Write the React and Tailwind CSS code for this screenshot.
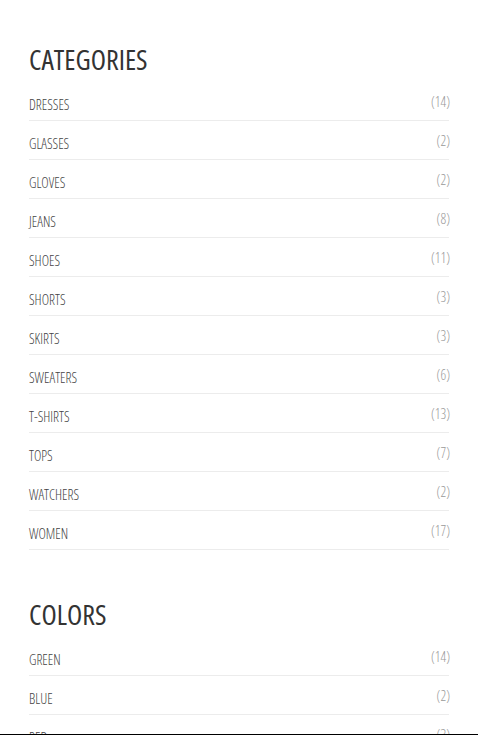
const categories = [
  ["DRESSES", 14],
  ["GLASSES", 2],
  ["GLOVES", 2],
  ["JEANS", 8],
  ["SHOES", 11],
  ["SHORTS", 3],
  ["SKIRTS", 3],
  ["SWEATERS", 6],
  ["T-SHIRTS", 13],
  ["TOPS", 7],
  ["WATCHERS", 2],
  ["WOMEN", 17],
];

const colors = [
  ["GREEN", 14],
  ["BLUE", 2],
  ["RED", 3],
];

function Section({ title, items }) {
  return (
    <div className="flex flex-col">
      <h2 className="text-[28px] leading-[32px] text-[#333] font-normal mb-[7px]">{title}</h2>
      <ul className="flex flex-col">
        {items.map(([name, count]) => (
          <li
            key={name}
            className="h-[39px] border-b border-[#ececec] flex items-center justify-between"
          >
            <span className="text-[14px] text-[#444] font-light font-stretch-[82%] mt-[7px]">{name}</span>
            <span className="text-[14px] text-[#999] font-light mt-[1px] mr-[-1px]">({count})</span>
          </li>
        ))}
      </ul>
    </div>
  );
}

export default function App() {
  return (
    <div className="h-[735px] flex flex-col bg-white font-['Open_Sans',sans-serif] font-stretch-condensed">
      <div className="flex-1 overflow-hidden px-[29px] pt-[43px] flex flex-col gap-[48px]">
        <Section title="CATEGORIES" items={categories} />
        <Section title="COLORS" items={colors} />
      </div>
      <div className="h-px bg-black" />
    </div>
  );
}
